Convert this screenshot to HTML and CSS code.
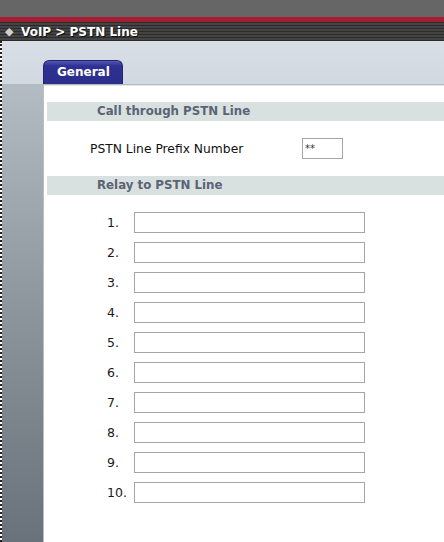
FILE: index.html
```html
<!DOCTYPE html>
<html lang="en">
<head>
    <meta charset="UTF-8">
    <title>VoIP &gt; PSTN Line</title>
    <link rel="stylesheet" href="styles.css">
</head>
<body>

<div id="top-strip"></div>
<div id="red-line"></div>
<div id="title-bar">
    <span class="diamond">&#9670;</span>
    <span class="title">VoIP &gt; PSTN Line</span>
</div>

<div id="page">
    <!-- Tabs -->
    <div id="tab-bar">
        <div class="tab active">General</div>
    </div>

    <div id="body">
        <div id="sidebar"></div>

        <div id="panel">
            <div class="section-head">Call through PSTN Line</div>
            <div class="prefix-row">
                <label class="prefix-label">PSTN Line Prefix Number</label>
                <input class="prefix-input" type="text" value="**">
            </div>

            <div class="section-head">Relay to PSTN Line</div>
            <div class="relay-list">
                <div class="relay-row"><span class="num">1.</span><input class="relay-input" type="text"></div>
                <div class="relay-row"><span class="num">2.</span><input class="relay-input" type="text"></div>
                <div class="relay-row"><span class="num">3.</span><input class="relay-input" type="text"></div>
                <div class="relay-row"><span class="num">4.</span><input class="relay-input" type="text"></div>
                <div class="relay-row"><span class="num">5.</span><input class="relay-input" type="text"></div>
                <div class="relay-row"><span class="num">6.</span><input class="relay-input" type="text"></div>
                <div class="relay-row"><span class="num">7.</span><input class="relay-input" type="text"></div>
                <div class="relay-row"><span class="num">8.</span><input class="relay-input" type="text"></div>
                <div class="relay-row"><span class="num">9.</span><input class="relay-input" type="text"></div>
                <div class="relay-row"><span class="num">10.</span><input class="relay-input" type="text"></div>
            </div>
        </div>
    </div>
</div>

</body>
</html>
```

FILE: styles.css
```css
body {
    margin: 0;
    width: 444px;
    height: 542px;
    overflow: hidden;
    font-family: "DejaVu Sans", Verdana, sans-serif;
    background-color: #fff;
}

#top-strip {
    height: 17px;
    background-color: #666666;
}

#red-line {
    height: 5px;
    background-color: #a61c32;
}

#title-bar {
    height: 19px;
    display: flex;
    align-items: center;
    padding-left: 5px;
    background: repeating-linear-gradient(180deg, #2b2b2b 0px, #2b2b2b 1px, #444444 1px, #444444 3px);
    color: #fff;
}

.diamond {
    font-size: 11px;
    color: #d0d0d0;
    width: 16px;
}

.title {
    font-size: 12px;
    font-weight: bold;
    text-shadow: 1px 1px 0 #111;
}

#page {
    border-left: 2px dotted #222;
    height: 501px;
    display: flex;
    flex-direction: column;
}

#tab-bar {
    height: 44px;
    box-sizing: border-box;
    background: linear-gradient(180deg, #dadfe6, #d1d8df);
    display: flex;
    align-items: flex-end;
    padding-left: 41px;
    border-bottom: 1px solid #b3b9bf;
}

.tab {
    width: 80px;
    height: 24px;
    box-sizing: border-box;
    border-radius: 6px 6px 0 0;
    background: linear-gradient(180deg, #5357b8 0px, #2e3193 5px, #2b2e8a 100%);
    border: 1px solid #23266e;
    border-bottom: none;
    color: #fff;
    font-size: 12px;
    font-weight: bold;
    padding-left: 13px;
    line-height: 23px;
}

#body {
    flex: 1;
    display: flex;
}

#sidebar {
    width: 41px;
    background: linear-gradient(180deg, #b3bbc3, #8c949c 50%, #69717a);
}

#panel {
    flex: 1;
    background-color: #fff;
    border-left: 1px solid #b9bec3;
    box-shadow: inset 0 1px 0 #e4e7ea;
    padding-left: 3px;
    padding-top: 17px;
}

.section-head {
    height: 19px;
    line-height: 19px;
    background-color: #d9e0e0;
    color: #5a6475;
    font-size: 11.8px;
    font-weight: bold;
    padding-left: 50px;
}

.prefix-row {
    display: flex;
    align-items: center;
    padding: 17px 0;
    padding-left: 43px;
}

.prefix-label {
    width: 212px;
    font-size: 12.3px;
    color: #111;
}

.prefix-input {
    width: 41px;
    height: 21px;
    box-sizing: border-box;
    border: 1px solid #a6a6a6;
    margin: 0;
    padding: 0 2px;
    font-family: "DejaVu Sans", sans-serif;
    font-size: 10px;
    color: #333;
    outline: none;
}

.relay-list {
    padding-top: 17px;
    display: flex;
    flex-direction: column;
    gap: 9px;
}

.relay-row {
    display: flex;
    align-items: center;
    padding-left: 60px;
}

.num {
    width: 27px;
    font-size: 12.5px;
    color: #1a1a1a;
}

.relay-input {
    width: 231px;
    height: 21px;
    box-sizing: border-box;
    border: 1px solid #a6a6a6;
    margin: 0;
    padding: 0 2px;
    outline: none;
}
```
